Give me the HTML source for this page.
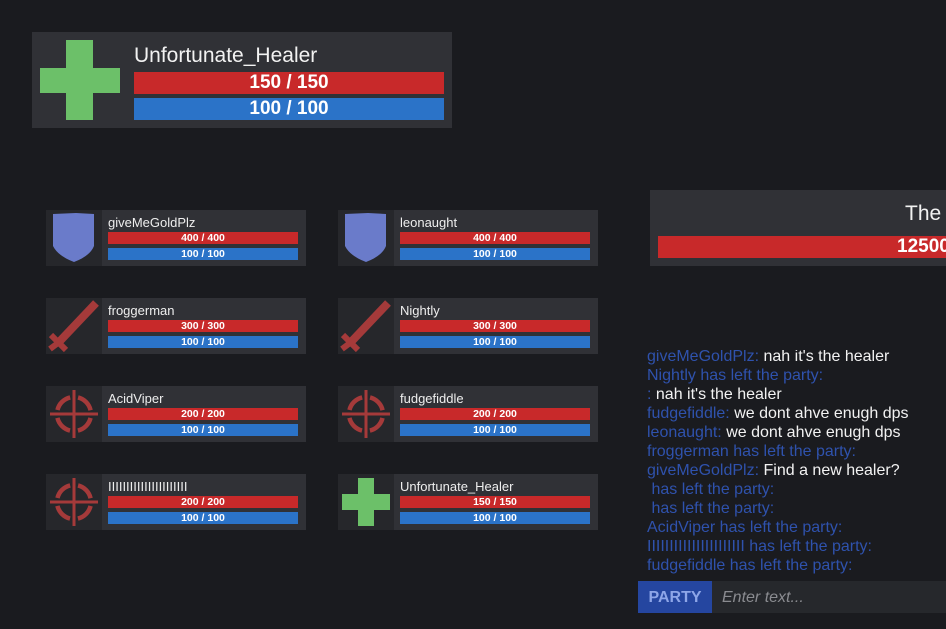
<!DOCTYPE html>
<html><head><meta charset="utf-8"><style>
*{margin:0;padding:0;box-sizing:border-box}
body{width:946px;height:629px;overflow:hidden;background:#1a1b1f;font-family:"Liberation Sans",Arial,sans-serif;position:relative}
.abs{position:absolute}
.bar{position:absolute;color:#fff;font-weight:bold;text-align:center}
.card{position:absolute;width:260px;height:56px;background:#303136}
.card .ic{position:absolute;left:0;top:0;width:56px;height:56px;background:#26272b}
.card .nm{position:absolute;left:62px;top:5px;font-size:13px;color:#eee}
.card .hp{left:62px;top:22px;width:190px;height:12px;background:#c8292a;font-size:10.5px;line-height:12px}
.card .mp{left:62px;top:38px;width:190px;height:12px;background:#2b73c8;font-size:10.5px;line-height:12px}
.chat{position:absolute;left:647px;top:350px;width:299px;height:225px;overflow:hidden;font-size:16px;line-height:19px;color:#2f52ad}
.chat .w{color:#f2f2f2}
</style></head><body>
<div class="abs" style="left:32px;top:32px;width:420px;height:96px;background:#303136">
 <div class="abs" style="left:34px;top:8px;width:27px;height:80px;background:#6cc069"></div>
 <div class="abs" style="left:8px;top:36px;width:80px;height:25px;background:#6cc069"></div>
 <div class="abs" style="left:102px;top:12px;font-size:21px;color:#f2f2f2">Unfortunate_Healer</div>
 <div class="bar" style="left:102px;top:40px;width:310px;height:22px;background:#c8292a;font-size:19px;line-height:22px">150 / 150</div>
 <div class="bar" style="left:102px;top:66px;width:310px;height:22px;background:#2b73c8;font-size:19px;line-height:22px">100 / 100</div>
</div>

<div class="card" style="left:46px;top:210px"><div class="ic"><svg width="56" height="56"><path d="M7 4 L30 3 L48 4 L48 36 Q44 46 28 52 Q12 46 7 36 Z" fill="#6a7bca"/></svg></div><div class="nm">giveMeGoldPlz</div><div class="bar hp">400 / 400</div><div class="bar mp">100 / 100</div></div>
<div class="card" style="left:338px;top:210px"><div class="ic"><svg width="56" height="56"><path d="M7 4 L30 3 L48 4 L48 36 Q44 46 28 52 Q12 46 7 36 Z" fill="#6a7bca"/></svg></div><div class="nm">leonaught</div><div class="bar hp">400 / 400</div><div class="bar mp">100 / 100</div></div>

<div class="card" style="left:46px;top:298px"><div class="ic"><svg width="56" height="56"><path d="M50 5 L14 43" stroke="#a53a3a" stroke-width="8"/><path d="M5 37 L20 52 M4 51 L12 45" stroke="#a53a3a" stroke-width="6"/></svg></div><div class="nm">froggerman</div><div class="bar hp">300 / 300</div><div class="bar mp">100 / 100</div></div>
<div class="card" style="left:338px;top:298px"><div class="ic"><svg width="56" height="56"><path d="M50 5 L14 43" stroke="#a53a3a" stroke-width="8"/><path d="M5 37 L20 52 M4 51 L12 45" stroke="#a53a3a" stroke-width="6"/></svg></div><div class="nm">Nightly</div><div class="bar hp">300 / 300</div><div class="bar mp">100 / 100</div></div>

<div class="card" style="left:46px;top:386px"><div class="ic"><svg width="56" height="56"><circle cx="28" cy="28" r="17" fill="none" stroke="#a53a3a" stroke-width="4.5" stroke-dasharray="18.7 8" stroke-dashoffset="-4"/><path d="M28 4V52M4 28H52" stroke="#a53a3a" stroke-width="3"/></svg></div><div class="nm">AcidViper</div><div class="bar hp">200 / 200</div><div class="bar mp">100 / 100</div></div>
<div class="card" style="left:338px;top:386px"><div class="ic"><svg width="56" height="56"><circle cx="28" cy="28" r="17" fill="none" stroke="#a53a3a" stroke-width="4.5" stroke-dasharray="18.7 8" stroke-dashoffset="-4"/><path d="M28 4V52M4 28H52" stroke="#a53a3a" stroke-width="3"/></svg></div><div class="nm">fudgefiddle</div><div class="bar hp">200 / 200</div><div class="bar mp">100 / 100</div></div>

<div class="card" style="left:46px;top:474px"><div class="ic"><svg width="56" height="56"><circle cx="28" cy="28" r="17" fill="none" stroke="#a53a3a" stroke-width="4.5" stroke-dasharray="18.7 8" stroke-dashoffset="-4"/><path d="M28 4V52M4 28H52" stroke="#a53a3a" stroke-width="3"/></svg></div><div class="nm">IIIIIIIIIIIIIIIIIIIIII</div><div class="bar hp">200 / 200</div><div class="bar mp">100 / 100</div></div>
<div class="card" style="left:338px;top:474px"><div class="ic"><div class="abs" style="left:20px;top:4px;width:16px;height:48px;background:#6cc069"></div><div class="abs" style="left:4px;top:20px;width:48px;height:16px;background:#6cc069"></div></div><div class="nm">Unfortunate_Healer</div><div class="bar hp">150 / 150</div><div class="bar mp">100 / 100</div></div>

<div class="abs" style="left:650px;top:190px;width:296px;height:76px;background:#303136;overflow:hidden">
 <div class="abs" style="left:255px;top:12px;font-size:21px;color:#f2f2f2;white-space:nowrap">The</div>
 <div class="bar" style="left:8px;top:46px;width:300px;height:22px;background:#c8292a;font-size:19px;line-height:22px;text-align:left;padding-left:239px;white-space:nowrap">12500</div>
</div>

<div class="chat">
<div style="margin-top:-3px">giveMeGoldPlz: <span class="w">nah it's the healer</span></div>
<div>Nightly has left the party:</div>
<div>: <span class="w">nah it's the healer</span></div>
<div>fudgefiddle: <span class="w">we dont ahve enugh dps</span></div>
<div>leonaught: <span class="w">we dont ahve enugh dps</span></div>
<div>froggerman has left the party:</div>
<div>giveMeGoldPlz: <span class="w">Find a new healer?</span></div>
<div>&nbsp;has left the party:</div>
<div>&nbsp;has left the party:</div>
<div>AcidViper has left the party:</div>
<div>IIIIIIIIIIIIIIIIIIIIII has left the party:</div>
<div>fudgefiddle has left the party:</div>
</div>

<div class="abs" style="left:638px;top:581px;width:74px;height:32px;background:#2546a0;color:#8ea6e8;font-weight:bold;font-size:16px;line-height:33px;text-align:center">PARTY</div>
<div class="abs" style="left:712px;top:581px;width:234px;height:32px;background:#26282c;color:#8a8b90;font-style:italic;font-size:16px;line-height:33px;padding-left:10px">Enter text...</div>
</body></html>
